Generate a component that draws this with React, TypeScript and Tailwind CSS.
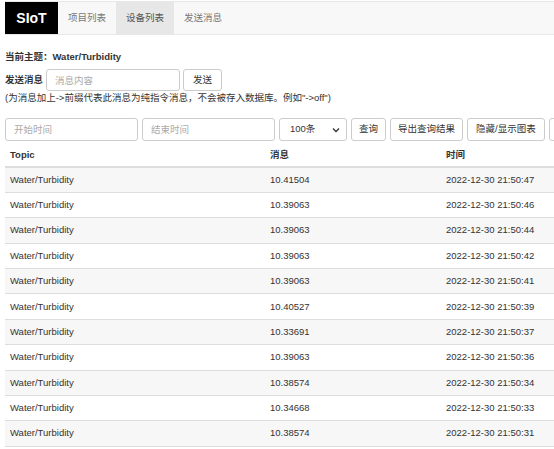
import React from "react";

const rows: [string, string][] = [
  ["10.41504", "2022-12-30 21:50:47"],
  ["10.39063", "2022-12-30 21:50:46"],
  ["10.39063", "2022-12-30 21:50:44"],
  ["10.39063", "2022-12-30 21:50:42"],
  ["10.39063", "2022-12-30 21:50:41"],
  ["10.40527", "2022-12-30 21:50:39"],
  ["10.33691", "2022-12-30 21:50:37"],
  ["10.39063", "2022-12-30 21:50:36"],
  ["10.38574", "2022-12-30 21:50:34"],
  ["10.34668", "2022-12-30 21:50:33"],
  ["10.38574", "2022-12-30 21:50:31"],
];

const font = { fontFamily: '"Liberation Sans", Arial, "Noto Sans CJK SC", sans-serif' };

export default function App() {
  return (
    <div className="w-[554px] h-[449px] overflow-hidden bg-white text-[#333] text-[9.5px]" style={font}>
      <div className="w-[640px] pl-[5px] pt-px">
        {/* Navbar */}
        <nav className="h-[34px] flex items-stretch bg-[#f8f8f8] border border-[#e7e7e7] border-l-0">
          <div className="w-[53px] bg-black text-white font-bold text-[14px] flex items-center justify-center">SIoT</div>
          <a className="px-[10px] flex items-center text-[#777]">项目列表</a>
          <a className="px-[10px] flex items-center text-[#555] bg-[#e7e7e7]">设备列表</a>
          <a className="px-[10px] flex items-center text-[#777]">发送消息</a>
        </nav>

        <div className="mt-[15px] font-bold h-[14px] leading-[14px]">当前主题：Water/Turbidity</div>

        <div className="mt-[5px] flex items-center gap-[3px] h-[22px]">
          <span className="font-bold">发送消息</span>
          <input
            className="w-[134px] h-[22px] border border-[#ccc] rounded-[3px] px-[8px] text-[9.5px] placeholder:text-[#aaa] outline-none"
            placeholder="消息内容"
          />
          <button className="h-[22px] px-[9px] border border-[#ccc] rounded-[3px] bg-white text-[#333]">发送</button>
        </div>

        <div className="mt-[0px] h-[14px] leading-[14px]">(为消息加上-&gt;前缀代表此消息为纯指令消息，不会被存入数据库。例如"-&gt;off")</div>

        {/* Filters */}
        <div className="mt-[13px] flex items-center gap-[4px] h-[23px]">
          <input
            className="w-[133px] h-[23px] border border-[#ccc] rounded-[3px] px-[8px] text-[9.5px] placeholder:text-[#aaa] outline-none"
            placeholder="开始时间"
          />
          <input
            className="w-[133px] h-[23px] border border-[#ccc] rounded-[3px] px-[8px] text-[9.5px] placeholder:text-[#aaa] outline-none"
            placeholder="结束时间"
          />
          <div className="w-[68px] h-[23px] border border-[#ccc] rounded-[3px] flex items-center justify-between pl-[10px] pr-[6px]">
            <span>100条</span>
            <svg width="8" height="6" viewBox="0 0 8 6"><path d="M1 1.5 L4 4.5 L7 1.5" fill="none" stroke="#333" strokeWidth="1.3" /></svg>
          </div>
          <button className="h-[23px] px-[7px] border border-[#ccc] rounded-[3px] bg-white">查询</button>
          <button className="h-[23px] px-[7px] border border-[#ccc] rounded-[3px] bg-white">导出查询结果</button>
          <button className="h-[23px] px-[8px] border border-[#ccc] rounded-[3px] bg-white">隐藏/显示图表</button>
          <button aria-label="删除" className="h-[23px] w-[40px] border border-[#ccc] rounded-[3px] bg-white" />
        </div>

        {/* Table */}
        <table className="mt-[3px] w-[620px] border-collapse">
          <thead>
            <tr className="h-[23px] border-b-2 border-[#ddd]">
              <th className="w-[260px] text-left font-bold px-[5px]">Topic</th>
              <th className="w-[176px] text-left font-bold px-[5px]">消息</th>
              <th className="text-left font-bold px-[5px]">时间</th>
            </tr>
          </thead>
          <tbody>
            {rows.map(([v, t], i) => (
              <tr key={i} className={`h-[25.4px] border-b border-[#ddd] ${i % 2 === 0 ? "bg-[#f7f7f7]" : "bg-white"}`}>
                <td className="px-[5px]">Water/Turbidity</td>
                <td className="px-[5px]">{v}</td>
                <td className="px-[5px]">{t}</td>
              </tr>
            ))}
          </tbody>
        </table>
      </div>
    </div>
  );
}
